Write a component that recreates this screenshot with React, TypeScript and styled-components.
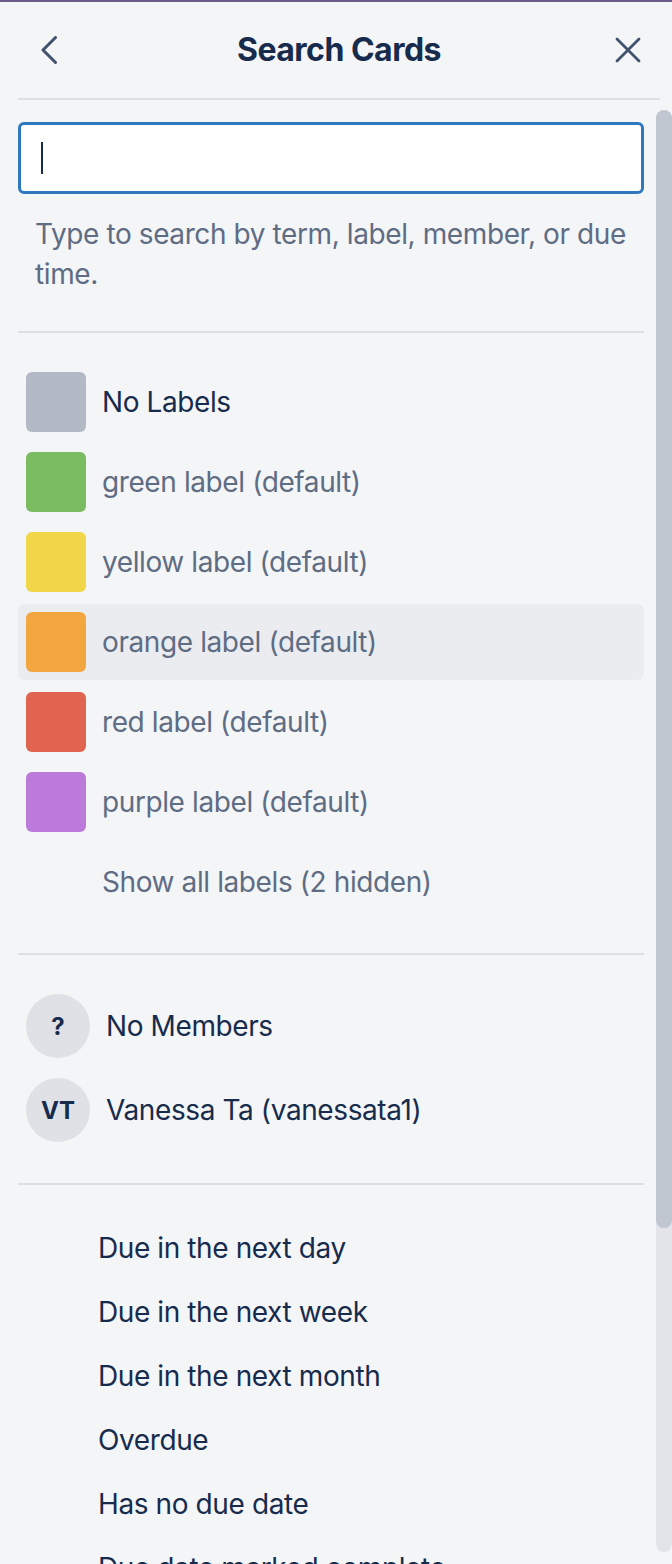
import React from 'react';
import styled, {createGlobalStyle} from 'styled-components';

const GlobalStyle = createGlobalStyle`
  html, body, #root {
    margin: 0;
    height: 100%;
  }
  body {
    background: #f4f5f7;
    font-family: Inter, Roboto, "Liberation Sans", sans-serif;
    letter-spacing: -0.4px;
    color: #172b4d;
  }
  * {
    box-sizing: border-box;
  }
`;

interface LabelItem {
  name: string;
  color: string;
  muted: boolean;
  active?: boolean;
}

const labels: LabelItem[] = [
  {name: 'No Labels', color: '#b3bac5', muted: false},
  {name: 'green label (default)', color: '#7abc5f', muted: true},
  {name: 'yellow label (default)', color: '#f0d648', muted: true},
  {name: 'orange label (default)', color: '#f3a540', muted: true, active: true},
  {name: 'red label (default)', color: '#e06450', muted: true},
  {name: 'purple label (default)', color: '#bc7adb', muted: true}
];

const members = [
  {initials: '?', name: 'No Members'},
  {initials: 'VT', name: 'Vanessa Ta (vanessata1)'}
];

const dueOptions = [
  'Due in the next day',
  'Due in the next week',
  'Due in the next month',
  'Overdue',
  'Has no due date',
  'Due date marked complete',
  'Due date not marked complete'
];

// share of the list that fits in the visible area
const visibleRatio = 0.775;

export default function App() {
  return (
    <Panel>
      <GlobalStyle />
      <BoardStrip />
      <Header>
        <BackButton aria-label="Back">
          <svg width="16" height="28" viewBox="0 0 16 28">
            <polyline points="14.5,1.5 2,14 14.5,26.5" fill="none" stroke="#42526e" strokeWidth="3" strokeLinecap="round" strokeLinejoin="round" />
          </svg>
        </BackButton>
        <Title>Search Cards</Title>
        <CloseButton aria-label="Close">
          <svg width="26" height="26" viewBox="0 0 26 26">
            <path d="M2 2 L24 24 M24 2 L2 24" fill="none" stroke="#42526e" strokeWidth="2.8" strokeLinecap="round" />
          </svg>
        </CloseButton>
      </Header>
      <Divider />
      <Body>
        <Content>
          <Field>
            <SearchInput />
            <Caret />
          </Field>
          <HelpText>Type to search by term, label, member, or due time.</HelpText>
          <SectionDivider />
          <Section>
            {labels.map((label) => (
              <LabelRow key={label.name} $active={label.active}>
                <Swatch $color={label.color} />
                <RowText $muted={label.muted}>{label.name}</RowText>
              </LabelRow>
            ))}
            <LabelRow>
              <SwatchSpacer />
              <RowText $muted={true}>Show all labels (2 hidden)</RowText>
            </LabelRow>
          </Section>
          <SectionDivider />
          <Section>
            {members.map((member) => (
              <MemberRow key={member.name}>
                <Avatar>{member.initials}</Avatar>
                <RowText>{member.name}</RowText>
              </MemberRow>
            ))}
          </Section>
          <SectionDivider />
          <Section $gap={0}>
            {dueOptions.map((option) => (
              <DueRow key={option}>{option}</DueRow>
            ))}
          </Section>
        </Content>
        <Rail>
          <Track>
            <Thumb style={{height: `${visibleRatio * 100}%`}} />
          </Track>
        </Rail>
      </Body>
    </Panel>
  );
}

const Panel = styled.div`
  display: flex;
  flex-direction: column;
  height: 100vh;
  background: #f4f5f7;
  overflow: hidden;
`;

const BoardStrip = styled.div`
  height: 2px;
  flex: none;
  background: #6b5b8c;
`;

const Header = styled.div`
  display: grid;
  grid-template-columns: 80px 1fr 80px;
  align-items: center;
  height: 96px;
  flex: none;
  padding: 0 12px 0 18px;
`;

const IconButton = styled.button`
  display: flex;
  align-items: center;
  background: none;
  border: 0;
  padding: 0;
  height: 40px;
  cursor: pointer;
`;

const BackButton = styled(IconButton)`
  justify-content: flex-start;
  padding-left: 23px;
`;

const CloseButton = styled(IconButton)`
  justify-content: flex-end;
  padding-right: 19px;
`;

const Title = styled.h2`
  margin: 0;
  text-align: center;
  font-size: 32px;
  font-weight: 700;
  letter-spacing: -0.5px;
  color: #172b4d;
  line-height: 40px;
`;

const Divider = styled.div`
  flex: none;
  height: 2px;
  margin: 0 12px 0 18px;
  background: #dcdfe4;
`;

const Body = styled.div`
  flex: 1;
  min-height: 0;
  display: flex;
`;

const Content = styled.div`
  flex: 1;
  min-width: 0;
  overflow: hidden;
  padding: 22px 12px 0 18px;
`;

const Rail = styled.div`
  width: 16px;
  flex: none;
  display: flex;
  padding: 10px 0 12px;
`;

const Track = styled.div`
  flex: 1;
  border-radius: 8px;
  background: #e2e4e9;
`;

const Thumb = styled.div`
  border-radius: 8px;
  background: #c1c7d0;
`;

const Field = styled.div`
  position: relative;
`;

const SearchInput = styled.input`
  display: block;
  width: 100%;
  height: 72px;
  margin: 0;
  padding: 0 22px;
  border: 3px solid #2f78bd;
  border-radius: 6px;
  background: #fff;
  font-family: inherit;
  font-size: 28px;
  color: #172b4d;
  outline: none;
`;

const Caret = styled.span`
  position: absolute;
  left: 23px;
  top: 20px;
  width: 2px;
  height: 32px;
  background: #172b4d;
`;

const HelpText = styled.p`
  margin: 20px 0 0;
  padding: 0 0 0 17px;
  font-size: 28px;
  line-height: 40px;
  color: #5e6c84;
`;

const SectionDivider = styled.hr`
  height: 2px;
  margin: 37px 0 0;
  border: 0;
  background: #dcdfe4;
`;

const Section = styled.div<{$gap?: number}>`
  display: flex;
  flex-direction: column;
  gap: ${(p) => p.$gap ?? 4}px;
  padding-top: 31px;

  & + ${SectionDivider} {
    margin-top: 33px;
  }
`;

const LabelRow = styled.div<{$active?: boolean}>`
  display: flex;
  align-items: center;
  gap: 16px;
  height: 76px;
  padding: 0 8px;
  border-radius: 6px;
  background: ${(p) => (p.$active ? '#ebecf0' : 'transparent')};
  cursor: pointer;
`;

const Swatch = styled.span<{$color: string}>`
  width: 60px;
  height: 60px;
  flex: none;
  border-radius: 6px;
  background: ${(p) => p.$color};
`;

const SwatchSpacer = styled.span`
  width: 60px;
  flex: none;
`;

const RowText = styled.span<{$muted?: boolean}>`
  font-size: 28px;
  line-height: 40px;
  white-space: nowrap;
  color: ${(p) => (p.$muted ? '#5e6c84' : '#172b4d')};
`;

const MemberRow = styled.div`
  display: flex;
  align-items: center;
  gap: 16px;
  height: 80px;
  padding: 0 8px;
  cursor: pointer;
`;

const Avatar = styled.span`
  display: flex;
  align-items: center;
  justify-content: center;
  width: 64px;
  height: 64px;
  flex: none;
  border-radius: 50%;
  background: #dfe1e6;
  font-size: 24px;
  font-weight: 700;
  letter-spacing: 0;
  color: #172b4d;
`;

const DueRow = styled.div`
  display: flex;
  align-items: center;
  height: 64px;
  padding-left: 80px;
  font-size: 28px;
  white-space: nowrap;
  color: #172b4d;
  cursor: pointer;
`;
